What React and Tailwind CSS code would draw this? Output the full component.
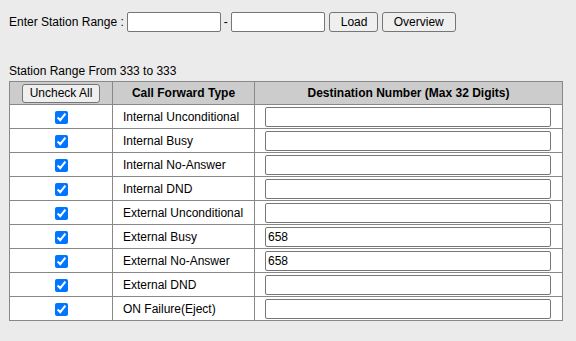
const rows = [
  { type: 'Internal Unconditional', dest: '' },
  { type: 'Internal Busy', dest: '' },
  { type: 'Internal No-Answer', dest: '' },
  { type: 'Internal DND', dest: '' },
  { type: 'External Unconditional', dest: '' },
  { type: 'External Busy', dest: '658' },
  { type: 'External No-Answer', dest: '658' },
  { type: 'External DND', dest: '' },
  { type: 'ON Failure(Eject)', dest: '' },
];

const btn =
  'h-[20px] px-[11px] bg-[#efefef] border border-[#767676] rounded-[3px] text-[12px] leading-none text-black';

export default function App() {
  return (
    <div className="min-h-screen bg-[#ebebeb] px-[9px] pt-[12px] font-['Liberation_Sans',Arial,sans-serif] text-[12px] text-black">
      {/* Range selector */}
      <div className="flex items-center h-[20px]">
        <span>Enter Station Range :</span>
        <input type="text" className="ml-[3px] w-[94px] h-[20px] bg-white border border-[#767676] rounded-[2px] px-[2px]" />
        <span className="mx-[3px]">-</span>
        <input type="text" className="w-[94px] h-[20px] bg-white border border-[#767676] rounded-[2px] px-[2px]" />
        <button className={`ml-[4px] w-[49px] ${btn}`}>Load</button>
        <button className={`ml-[4px] w-[74px] ${btn}`}>Overview</button>
      </div>

      <p className="mt-[32px] leading-[14px]">Station Range From 333 to 333</p>

      <table className="mt-[3px] w-[553px] border-collapse border border-[#888] table-fixed">
        <colgroup>
          <col className="w-[103px]" />
          <col className="w-[142px]" />
          <col className="w-[308px]" />
        </colgroup>
        <thead>
          <tr className="bg-[#cccccc] h-[23px]">
            <th className="border border-[#888] p-0">
              <button className="h-[19px] w-[78px] bg-[#efefef] border border-[#767676] rounded-[3px] text-[12px] font-normal leading-none">
                Uncheck All
              </button>
            </th>
            <th className="border border-[#888] font-bold">Call Forward Type</th>
            <th className="border border-[#888] font-bold">Destination Number (Max 32 Digits)</th>
          </tr>
        </thead>
        <tbody className="bg-white">
          {rows.map((r) => (
            <tr key={r.type} className="h-[24px]">
              <td className="border border-[#888] text-center p-0">
                <input type="checkbox" defaultChecked className="w-[13px] h-[13px] align-middle m-0" />
              </td>
              <td className="border border-[#888] pl-[10px]">{r.type}</td>
              <td className="border border-[#888] px-[10px]">
                <input
                  type="text"
                  defaultValue={r.dest}
                  className="block w-[286px] h-[20px] bg-white border border-[#767676] rounded-[2px] px-[2px] text-[12px]"
                />
              </td>
            </tr>
          ))}
        </tbody>
      </table>
    </div>
  );
}
